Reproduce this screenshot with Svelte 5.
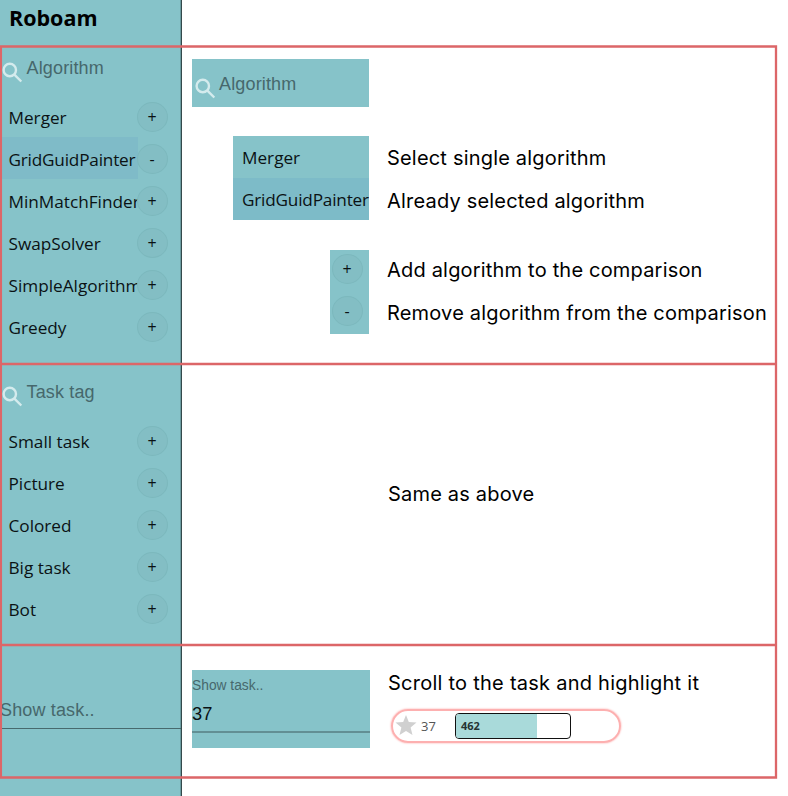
<script>
  const algorithms = [
    { name: 'Merger', selected: false },
    { name: 'GridGuidPainter', selected: true },
    { name: 'MinMatchFinder', selected: false },
    { name: 'SwapSolver', selected: false },
    { name: 'SimpleAlgorithm', selected: false },
    { name: 'Greedy', selected: false }
  ];
  const tags = ['Small task', 'Picture', 'Colored', 'Big task', 'Bot'].map((name) => ({ name, selected: false }));
</script>

{#snippet search(label)}
  <div class="search">
    <svg class="lens" width="22" height="22" viewBox="0 0 22 22">
      <circle cx="7.8" cy="8" r="6.2" />
      <path d="M12.4 12.6 L19.3 19.5" />
    </svg>
    <span>{label}</span>
  </div>
{/snippet}

{#snippet round(sign)}
  <button class="round">{sign}</button>
{/snippet}

{#snippet list(items)}
  <div class="list">
    {#each items as item}
      <div class="row">
        <div class="name" class:selected={item.selected}>{item.name}</div>
        {@render round(item.selected ? '-' : '+')}
      </div>
    {/each}
  </div>
{/snippet}

<div class="page">
  <aside>
    <h1>Roboam</h1>
    <section class="algorithms">
      {@render search('Algorithm')}
      {@render list(algorithms)}
    </section>
    <section class="tags">
      {@render search('Task tag')}
      {@render list(tags)}
    </section>
    <div class="show">Show task..</div>
  </aside>

  <main>
    <section class="legend-algorithms">
      <div class="panel search-panel">{@render search('Algorithm')}</div>
      <div class="legend names">
        <div class="panel names-panel">
          <div class="name">Merger</div>
          <div class="name dark">GridGuidPainter</div>
        </div>
        <div class="notes">
          <p>Select single algorithm</p>
          <p>Already selected algorithm</p>
        </div>
      </div>
      <div class="legend buttons">
        <div class="panel buttons-panel">
          {@render round('+')}
          {@render round('-')}
        </div>
        <div class="notes">
          <p>Add algorithm to the comparison</p>
          <p>Remove algorithm from the comparison</p>
        </div>
      </div>
    </section>
    <section class="legend-tags">
      <p>Same as above</p>
    </section>
    <section class="legend-show">
      <div class="panel input-panel">
        <div class="label">Show task..</div>
        <div class="value">37</div>
      </div>
      <div class="result">
        <p>Scroll to the task and highlight it</p>
        <div class="pill">
          <svg width="22" height="21" viewBox="0 0 22 21">
            <path d="M11 0 L13.8 7 L21.5 7.6 L15.6 12.5 L17.5 20 L11 16 L4.5 20 L6.4 12.5 L.5 7.6 L8.2 7 Z" fill="#d0d0d0" />
          </svg>
          <span class="id">37</span>
          <div class="bar"><div class="fill" style="width: 71%">462</div></div>
        </div>
      </div>
    </section>
  </main>

  <svg class="frame" width="788" height="796" viewBox="0 0 788 796">
    <path d="M.9 46.5 H776 V777.5 H.9 Z M1 364 H776 M1 645 H776" />
  </svg>
</div>

<style>
  :global(body) {
    margin: 0;
    background: #fff;
  }
  .page {
    position: relative;
    display: flex;
    width: 788px;
    height: 796px;
    overflow: hidden;
    background: #fff;
    color: #0b1214;
    font-family: 'Open Sans', 'Noto Sans', sans-serif;
  }
  aside {
    box-sizing: border-box;
    width: 182px;
    height: 796px;
    flex: none;
    background: #86c3c9;
    border-right: 1px solid #34494b;
    box-shadow: inset -1px 0 #6c9da2;
  }
  h1 {
    margin: 0;
    height: 46px;
    padding-left: 9px;
    font-size: 21.5px;
    line-height: 36px;
    font-weight: 700;
    color: #000;
  }
  .algorithms {
    height: 318px;
  }
  .tags {
    height: 281px;
    padding-top: 6px;
    box-sizing: border-box;
  }
  .search {
    display: flex;
    height: 49px;
    padding-left: 2px;
    font: 18px/44px 'Liberation Sans', sans-serif;
    letter-spacing: 0.15px;
    color: #46686c;
  }
  .lens {
    margin: 15.5px 2.5px 0 0;
    flex: none;
    fill: none;
    stroke: #d4ebed;
    stroke-width: 2.4;
  }
  .row {
    display: flex;
    height: 42px;
  }
  .name {
    box-sizing: border-box;
    width: 137.5px;
    height: 42px;
    padding-left: 8.5px;
    line-height: 45px;
    font-size: 17.2px;
    white-space: nowrap;
    overflow: hidden;
  }
  .selected,
  .dark {
    background: #7fbbc8;
    letter-spacing: -0.2px;
  }
  .round {
    box-sizing: border-box;
    width: 31px;
    height: 30px;
    margin: 7px 0 5px -1px;
    padding: 0;
    border: 1px solid #7cb8bd;
    border-radius: 50%;
    background: #83bec4;
    color: #0b1214;
    font: 16px/29px 'Open Sans', sans-serif;
    text-align: center;
  }
  .show {
    width: 181px;
    height: 84px;
    box-sizing: border-box;
    padding-top: 54px;
    border-bottom: 1px solid #47696d;
    font: 18px/22px 'Liberation Sans', sans-serif;
    letter-spacing: 0.15px;
    color: #46686c;
  }
  main {
    flex: 1;
    padding-left: 10px;
    padding-top: 46px;
  }
  .panel {
    background: #86c3c9;
    flex: none;
  }
  .legend-algorithms {
    height: 318px;
    padding-top: 13px;
    box-sizing: border-box;
  }
  .search-panel {
    width: 177px;
    height: 48px;
  }
  .search-panel .search {
    padding: 3px 0 0 2.5px;
    height: 45px;
  }
  .legend {
    display: flex;
  }
  .names {
    height: 84px;
    margin: 29px 0 0 41px;
  }
  .names .notes {
    margin-top: 1px;
  }
  .names-panel {
    width: 136px;
    height: 84px;
  }
  .names-panel .name {
    width: 136px;
    padding-left: 9px;
    line-height: 44px;
  }
  .dark {
    background: #7dbbc8;
  }
  .buttons {
    margin: 30px 0 0 138px;
  }
  .buttons-panel {
    width: 39px;
    height: 84px;
    display: flex;
    flex-direction: column;
  }
  .buttons-panel .round {
    margin: 4px 0 8px 1.5px;
  }
  .notes {
    padding-left: 18px;
  }
  p {
    margin: 0;
    font: 20px/43px Inter, sans-serif;
    letter-spacing: 0.19px;
    color: #000;
    white-space: nowrap;
  }
  .buttons .notes {
    margin-top: -1px;
  }
  .legend-tags {
    height: 281px;
    box-sizing: border-box;
    padding: 109px 0 0 196px;
  }
  .legend-show {
    display: flex;
    padding-top: 25px;
  }
  .input-panel {
    width: 178px;
    height: 78px;
    font-family: 'Liberation Sans', sans-serif;
  }
  .label {
    padding-top: 6px;
    font-size: 13.8px;
    line-height: 20px;
    color: #46686c;
  }
  .value {
    height: 35px;
    border-bottom: 2px solid #628f94;
    font-size: 18.3px;
    line-height: 35px;
  }
  .result {
    padding-left: 18px;
    margin-top: -8px;
  }
  .result p {
    letter-spacing: 0.25px;
  }
  .pill {
    box-sizing: border-box;
    display: flex;
    width: 230px;
    height: 34px;
    margin: 4px 0 0 3px;
    padding: 3px 0 0 2px;
    border: 2px solid #fdb0b0;
    border-radius: 17px;
    box-shadow: 0 0 2px #ff9a9a;
  }
  .pill svg {
    margin-top: 1px;
    flex: none;
  }
  .id {
    width: 38px;
    padding-left: 4px;
    box-sizing: border-box;
    font-size: 13px;
    line-height: 25px;
    color: #555;
  }
  .bar {
    box-sizing: border-box;
    width: 116px;
    height: 26px;
    margin-top: -1px;
    border: 1.5px solid #111;
    border-radius: 4px;
    overflow: hidden;
  }
  .fill {
    height: 100%;
    box-sizing: border-box;
    padding-left: 5px;
    background: #a9dada;
    font-size: 11px;
    font-weight: 700;
    line-height: 24px;
    color: #263333;
  }
  .frame {
    position: absolute;
    left: 0;
    top: 0;
    fill: none;
    stroke: #dc6668;
    stroke-width: 2.3;
    pointer-events: none;
  }
</style>
